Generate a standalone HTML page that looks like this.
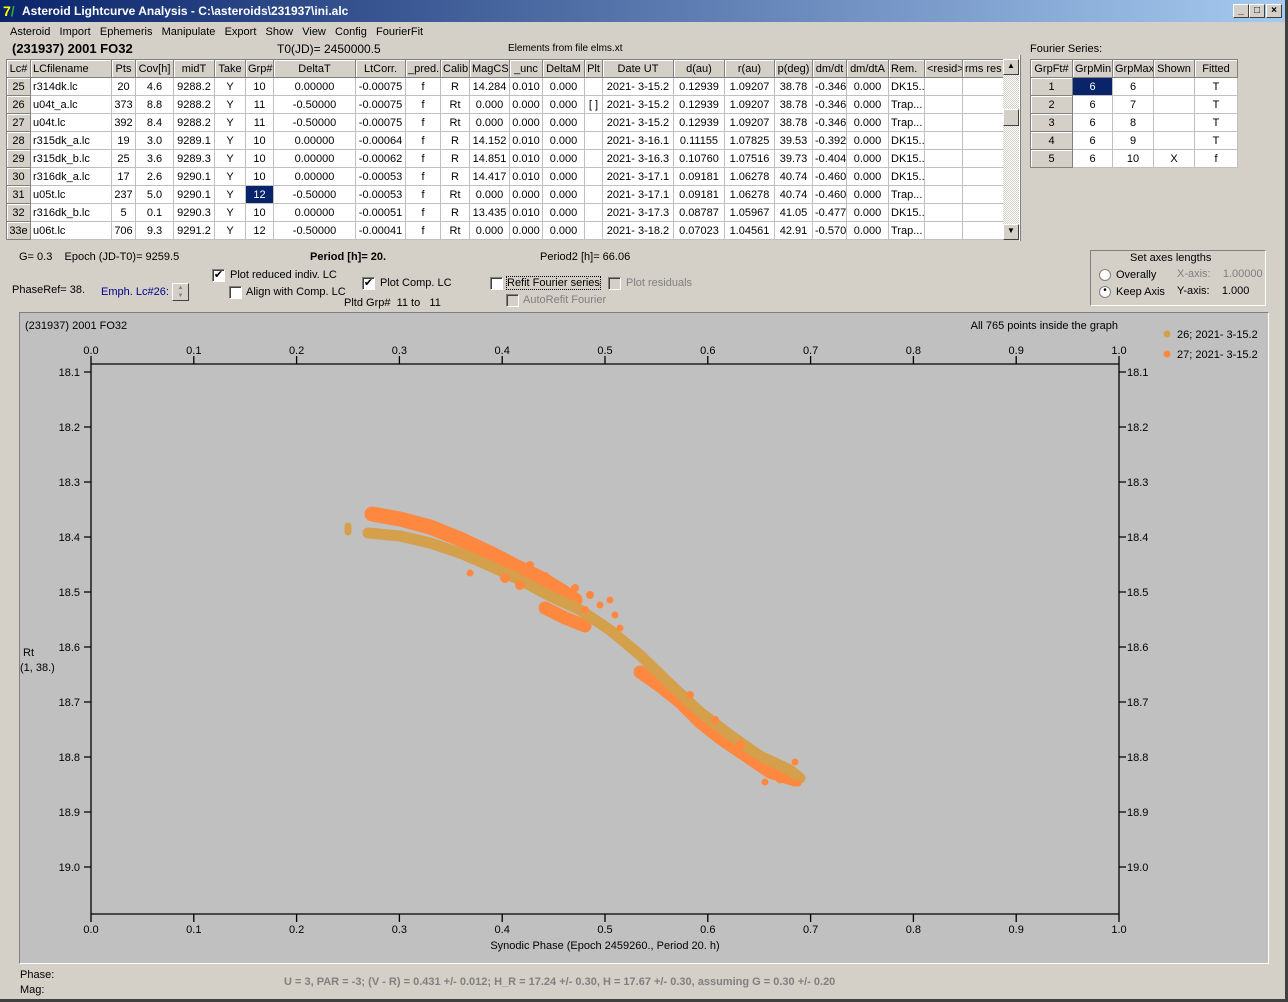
<!DOCTYPE html>
<html><head><meta charset="utf-8"><style>
*{box-sizing:border-box}
body{margin:0;width:1288px;height:1002px;background:#d4d0c8;font-family:"Liberation Sans",sans-serif;font-size:11px;color:#000;position:relative;overflow:hidden}
.a{position:absolute;white-space:nowrap}
#title{left:0;top:0;width:1288px;height:22px;background:linear-gradient(90deg,#0a246a,#a6caf0);color:#fff;font-weight:bold;font-size:12px;line-height:22px;padding-left:22px}
.wb{position:absolute;top:4px;width:16px;height:14px;background:#d4d0c8;border:1px solid;border-color:#fff #404040 #404040 #fff;font-size:10px;line-height:12px;text-align:center;color:#000;font-weight:bold}
table{border-collapse:collapse;table-layout:fixed;position:absolute;background:#fff}
td{border:1px solid #c0c0c0;height:18px;padding:0 2px;text-align:center;overflow:hidden;white-space:nowrap;font-size:11px}
tr.h td{background:#d4d0c8;border:1px solid #808080;box-shadow:inset 1px 1px #fff}
td.f{background:#d4d0c8;border:1px solid #808080;box-shadow:inset 1px 1px #fff}
td.l{text-align:left}
td.s{background:#0a246a;color:#fff}
.cb{position:absolute;width:13px;height:13px;background:#fff;border:1px solid;border-color:#808080 #fff #fff #808080;box-shadow:inset 1px 1px #404040;font-size:11px;line-height:11px;text-align:center}
.dis{color:#808080}
</style></head><body>
<div class="a" id="title">Asteroid Lightcurve Analysis - C:\asteroids\231937\ini.alc</div>
<div class="a" style="left:3px;top:3px;width:16px;height:16px;color:#ff0;font-weight:bold;font-size:14px;line-height:16px">7<span style="color:#3a3">/</span></div>
<div class="wb" style="left:1233px">_</div><div class="wb" style="left:1249px">□</div><div class="wb" style="left:1266px">×</div>
<div class="a" style="left:10px;top:26px">Asteroid&nbsp;&nbsp;&nbsp;Import&nbsp;&nbsp;&nbsp;Ephemeris&nbsp;&nbsp;&nbsp;Manipulate&nbsp;&nbsp;&nbsp;Export&nbsp;&nbsp;&nbsp;Show&nbsp;&nbsp;&nbsp;View&nbsp;&nbsp;&nbsp;Config&nbsp;&nbsp;&nbsp;FourierFit</div>
<div class="a" style="left:12px;top:41px;font-weight:bold;font-size:13px">(231937) 2001 FO32</div>
<div class="a" style="left:277px;top:42px;font-size:12px">T0(JD)= 2450000.5</div>
<div class="a" style="left:508px;top:43px;font-size:10px">Elements from file elms.xt</div>
<div class="a" style="left:1030px;top:43px">Fourier Series:</div>
<div class="a" style="left:1019px;top:55px;width:2px;height:186px;border-left:1px solid #fff;border-right:1px solid #808080"></div>

<table style="left:6px;top:59px;width:997px">
<colgroup><col style="width:24px"><col style="width:81px"><col style="width:24px"><col style="width:38px"><col style="width:41px"><col style="width:31px"><col style="width:28px"><col style="width:82px"><col style="width:50px"><col style="width:35px"><col style="width:29px"><col style="width:40px"><col style="width:33px"><col style="width:42px"><col style="width:18px"><col style="width:71px"><col style="width:51px"><col style="width:50px"><col style="width:38px"><col style="width:34px"><col style="width:42px"><col style="width:36px"><col style="width:38px"><col style="width:41px"></colgroup>
<tr class="h"><td>Lc#</td><td class="l">LCfilename</td><td>Pts</td><td>Cov[h]</td><td>midT</td><td>Take</td><td>Grp#</td><td>DeltaT</td><td>LtCorr.</td><td>_pred.</td><td>Calib.</td><td>MagCS</td><td>_unc</td><td>DeltaM</td><td>Plt</td><td>Date UT</td><td>d(au)</td><td>r(au)</td><td>p(deg)</td><td>dm/dt</td><td>dm/dtA</td><td class="l">Rem.</td><td>&lt;resid&gt;</td><td>rms res</td></tr>
<tr><td class="f">25</td><td class="l">r314dk.lc</td><td>20</td><td>4.6</td><td>9288.2</td><td>Y</td><td>10</td><td>0.00000</td><td>-0.00075</td><td>f</td><td>R</td><td>14.284</td><td>0.010</td><td>0.000</td><td></td><td>2021- 3-15.2</td><td>0.12939</td><td>1.09207</td><td>38.78</td><td>-0.346</td><td>0.000</td><td class="l">DK15..</td><td></td><td></td></tr>
<tr><td class="f">26</td><td class="l">u04t_a.lc</td><td>373</td><td>8.8</td><td>9288.2</td><td>Y</td><td>11</td><td>-0.50000</td><td>-0.00075</td><td>f</td><td>Rt</td><td>0.000</td><td>0.000</td><td>0.000</td><td>[ ]</td><td>2021- 3-15.2</td><td>0.12939</td><td>1.09207</td><td>38.78</td><td>-0.346</td><td>0.000</td><td class="l">Trap...</td><td></td><td></td></tr>
<tr><td class="f">27</td><td class="l">u04t.lc</td><td>392</td><td>8.4</td><td>9288.2</td><td>Y</td><td>11</td><td>-0.50000</td><td>-0.00075</td><td>f</td><td>Rt</td><td>0.000</td><td>0.000</td><td>0.000</td><td></td><td>2021- 3-15.2</td><td>0.12939</td><td>1.09207</td><td>38.78</td><td>-0.346</td><td>0.000</td><td class="l">Trap...</td><td></td><td></td></tr>
<tr><td class="f">28</td><td class="l">r315dk_a.lc</td><td>19</td><td>3.0</td><td>9289.1</td><td>Y</td><td>10</td><td>0.00000</td><td>-0.00064</td><td>f</td><td>R</td><td>14.152</td><td>0.010</td><td>0.000</td><td></td><td>2021- 3-16.1</td><td>0.11155</td><td>1.07825</td><td>39.53</td><td>-0.392</td><td>0.000</td><td class="l">DK15..</td><td></td><td></td></tr>
<tr><td class="f">29</td><td class="l">r315dk_b.lc</td><td>25</td><td>3.6</td><td>9289.3</td><td>Y</td><td>10</td><td>0.00000</td><td>-0.00062</td><td>f</td><td>R</td><td>14.851</td><td>0.010</td><td>0.000</td><td></td><td>2021- 3-16.3</td><td>0.10760</td><td>1.07516</td><td>39.73</td><td>-0.404</td><td>0.000</td><td class="l">DK15..</td><td></td><td></td></tr>
<tr><td class="f">30</td><td class="l">r316dk_a.lc</td><td>17</td><td>2.6</td><td>9290.1</td><td>Y</td><td>10</td><td>0.00000</td><td>-0.00053</td><td>f</td><td>R</td><td>14.417</td><td>0.010</td><td>0.000</td><td></td><td>2021- 3-17.1</td><td>0.09181</td><td>1.06278</td><td>40.74</td><td>-0.460</td><td>0.000</td><td class="l">DK15..</td><td></td><td></td></tr>
<tr><td class="f">31</td><td class="l">u05t.lc</td><td>237</td><td>5.0</td><td>9290.1</td><td>Y</td><td class="s">12</td><td>-0.50000</td><td>-0.00053</td><td>f</td><td>Rt</td><td>0.000</td><td>0.000</td><td>0.000</td><td></td><td>2021- 3-17.1</td><td>0.09181</td><td>1.06278</td><td>40.74</td><td>-0.460</td><td>0.000</td><td class="l">Trap...</td><td></td><td></td></tr>
<tr><td class="f">32</td><td class="l">r316dk_b.lc</td><td>5</td><td>0.1</td><td>9290.3</td><td>Y</td><td>10</td><td>0.00000</td><td>-0.00051</td><td>f</td><td>R</td><td>13.435</td><td>0.010</td><td>0.000</td><td></td><td>2021- 3-17.3</td><td>0.08787</td><td>1.05967</td><td>41.05</td><td>-0.477</td><td>0.000</td><td class="l">DK15..</td><td></td><td></td></tr>
<tr><td class="f">33e</td><td class="l">u06t.lc</td><td>706</td><td>9.3</td><td>9291.2</td><td>Y</td><td>12</td><td>-0.50000</td><td>-0.00041</td><td>f</td><td>Rt</td><td>0.000</td><td>0.000</td><td>0.000</td><td></td><td>2021- 3-18.2</td><td>0.07023</td><td>1.04561</td><td>42.91</td><td>-0.570</td><td>0.000</td><td class="l">Trap...</td><td></td><td></td></tr>
</table>
<div class="a" style="left:1003px;top:59px;width:16px;height:181px;background:repeating-conic-gradient(#fff 0 25%,#d4d0c8 0 50%) 0 0/2px 2px"></div>
<div class="wb" style="left:1003px;top:59px;width:16px;height:16px;font-size:8px">▲</div>
<div class="wb" style="left:1003px;top:109px;width:16px;height:17px"></div>
<div class="wb" style="left:1003px;top:224px;width:16px;height:16px;font-size:8px">▼</div>

<table style="left:1030px;top:59px;width:207px">
<colgroup><col style="width:42px"><col style="width:40px"><col style="width:41px"><col style="width:41px"><col style="width:43px"></colgroup>
<tr class="h"><td>GrpFt#</td><td>GrpMin</td><td>GrpMax</td><td>Shown</td><td>Fitted</td></tr>
<tr><td class="f">1</td><td class="s">6</td><td>6</td><td></td><td>T</td></tr>
<tr><td class="f">2</td><td>6</td><td>7</td><td></td><td>T</td></tr>
<tr><td class="f">3</td><td>6</td><td>8</td><td></td><td>T</td></tr>
<tr><td class="f">4</td><td>6</td><td>9</td><td></td><td>T</td></tr>
<tr><td class="f">5</td><td>6</td><td>10</td><td>X</td><td>f</td></tr>
</table>

<div class="a" style="left:19px;top:251px">G= 0.3&nbsp;&nbsp;&nbsp;&nbsp;Epoch (JD-T0)= 9259.5</div>
<div class="a" style="left:310px;top:251px;font-weight:bold">Period [h]= 20.</div>
<div class="a" style="left:540px;top:251px">Period2 [h]= 66.06</div>
<div class="a" style="left:12px;top:284px">PhaseRef= 38.</div>
<div class="a" style="left:101px;top:286px;color:#00008b">Emph. Lc#26:</div>
<div class="a" style="left:172px;top:283px;width:17px;height:18px;border:1px solid;border-color:#fff #404040 #404040 #fff;font-size:6px;line-height:8px;text-align:center;color:#808080">▲<br>▼</div>
<div class="cb" style="left:212px;top:269px">✔</div><div class="a" style="left:230px;top:269px">Plot reduced indiv. LC</div>
<div class="cb" style="left:229px;top:286px"></div><div class="a" style="left:246px;top:286px">Align with Comp. LC</div>
<div class="cb" style="left:362px;top:277px">✔</div><div class="a" style="left:380px;top:277px">Plot Comp. LC</div>
<div class="a" style="left:344px;top:297px">Pltd Grp#&nbsp; 11 to&nbsp;&nbsp; 11</div>
<div class="cb" style="left:490px;top:277px"></div><div class="a" style="left:507px;top:277px;outline:1px dotted #000">Refit Fourier series</div>
<div class="cb" style="left:608px;top:277px;background:#d4d0c8"></div><div class="a dis" style="left:626px;top:277px">Plot residuals</div>
<div class="cb" style="left:506px;top:294px;background:#d4d0c8"></div><div class="a dis" style="left:523px;top:294px">AutoRefit Fourier</div>

<div class="a" style="left:1090px;top:250px;width:176px;height:56px;border:1px solid;border-color:#808080 #fff #fff #808080"></div>
<div class="a" style="left:1130px;top:252px">Set axes lengths</div>
<div class="a" style="left:1099px;top:269px;width:12px;height:12px;border-radius:50%;background:#fff;border:1px solid #808080"></div><div class="a" style="left:1116px;top:269px">Overally</div>
<div class="a" style="left:1099px;top:286px;width:12px;height:12px;border-radius:50%;background:#fff;border:1px solid #808080;text-align:center;line-height:8px;font-size:10px">•</div><div class="a" style="left:1116px;top:286px">Keep Axis</div>
<div class="a dis" style="left:1177px;top:268px">X-axis:&nbsp;&nbsp;&nbsp;&nbsp;1.00000</div>
<div class="a" style="left:1177px;top:285px">Y-axis:&nbsp;&nbsp;&nbsp;&nbsp;1.000</div>

<div class="a" style="left:19px;top:312px;width:1250px;height:652px;background:#c0c0c0;border:1px solid;border-color:#808080 #fff #fff #808080"></div>
<svg class="a" style="left:0;top:0" width="1288" height="1002" font-family="Liberation Sans, sans-serif" font-size="11">
<text x="25" y="329">(231937) 2001 FO32</text>
<text x="1118" y="329" text-anchor="end">All 765 points inside the graph</text>
<circle cx="1167" cy="334" r="3.5" fill="#d4a04c"/><text x="1177" y="338">26; 2021- 3-15.2</text>
<circle cx="1167" cy="354" r="3.5" fill="#ff8840"/><text x="1177" y="358">27; 2021- 3-15.2</text>
<g stroke="#000" stroke-width="1.3" fill="none">
<path d="M91 364H1119M91 914H1119M91 364V914M1119 364V914"/>
<path d="M91 356v8M193.8 356v8M296.6 356v8M399.4 356v8M502.2 356v8M605 356v8M707.8 356v8M810.6 356v8M913.4 356v8M1016.2 356v8M1119 356v8"/>
<path d="M91 914v8M193.8 914v8M296.6 914v8M399.4 914v8M502.2 914v8M605 914v8M707.8 914v8M810.6 914v8M913.4 914v8M1016.2 914v8M1119 914v8"/>
<path d="M84 372h7M84 427h7M84 482h7M84 537h7M84 592h7M84 647h7M84 702h7M84 757h7M84 812h7M84 867h7"/>
<path d="M1119 372h7M1119 427h7M1119 482h7M1119 537h7M1119 592h7M1119 647h7M1119 702h7M1119 757h7M1119 812h7M1119 867h7"/>
</g>
<g text-anchor="middle">
<text x="91" y="354">0.0</text><text x="193.8" y="354">0.1</text><text x="296.6" y="354">0.2</text><text x="399.4" y="354">0.3</text><text x="502.2" y="354">0.4</text><text x="605" y="354">0.5</text><text x="707.8" y="354">0.6</text><text x="810.6" y="354">0.7</text><text x="913.4" y="354">0.8</text><text x="1016.2" y="354">0.9</text><text x="1119" y="354">1.0</text>
<text x="91" y="933">0.0</text><text x="193.8" y="933">0.1</text><text x="296.6" y="933">0.2</text><text x="399.4" y="933">0.3</text><text x="502.2" y="933">0.4</text><text x="605" y="933">0.5</text><text x="707.8" y="933">0.6</text><text x="810.6" y="933">0.7</text><text x="913.4" y="933">0.8</text><text x="1016.2" y="933">0.9</text><text x="1119" y="933">1.0</text>
<text x="605" y="949">Synodic Phase (Epoch 2459260., Period 20. h)</text>
</g>
<g text-anchor="end"><text x="80" y="376">18.1</text><text x="80" y="431">18.2</text><text x="80" y="486">18.3</text><text x="80" y="541">18.4</text><text x="80" y="596">18.5</text><text x="80" y="651">18.6</text><text x="80" y="706">18.7</text><text x="80" y="761">18.8</text><text x="80" y="816">18.9</text><text x="80" y="871">19.0</text></g>
<g><text x="1127" y="376">18.1</text><text x="1127" y="431">18.2</text><text x="1127" y="486">18.3</text><text x="1127" y="541">18.4</text><text x="1127" y="596">18.5</text><text x="1127" y="651">18.6</text><text x="1127" y="706">18.7</text><text x="1127" y="761">18.8</text><text x="1127" y="816">18.9</text><text x="1127" y="871">19.0</text></g>
<text x="23" y="656">Rt</text><text x="20" y="671">(1, 38.)</text>
<g fill="none" stroke-linecap="round" stroke-linejoin="round">
<path d="M372 514L400 519L430 527L460 539L490 553L515 566L540 578L560 590L575 600" stroke="#ff8840" stroke-width="15"/>
<path d="M545 608L565 618L585 626M640 672L660 686L680 702L700 722L720 738L745 755L770 772L795 780" stroke="#ff8840" stroke-width="13"/>
<path d="M368 533L400 536L430 543L460 553L490 566L520 580L550 596L580 610L610 630L640 655L670 684L700 712L730 735L760 756L790 770L800 778" stroke="#d4a04c" stroke-width="11"/>
<path d="M348 526v6" stroke="#d4a04c" stroke-width="7"/>
</g>
<g fill="#ff8840">
<circle cx="470" cy="573" r="3.5"/><circle cx="505" cy="578" r="5"/><circle cx="520" cy="585" r="5"/><circle cx="575" cy="588" r="4"/><circle cx="590" cy="595" r="4"/><circle cx="600" cy="605" r="3.5"/><circle cx="615" cy="615" r="3.5"/><circle cx="620" cy="628" r="3.5"/><circle cx="585" cy="610" r="4"/><circle cx="610" cy="600" r="3.5"/><circle cx="690" cy="695" r="4"/><circle cx="715" cy="720" r="4"/><circle cx="740" cy="745" r="5"/><circle cx="755" cy="762" r="4"/><circle cx="795" cy="762" r="3.5"/><circle cx="798" cy="783" r="3.5"/><circle cx="780" cy="780" r="3.5"/><circle cx="765" cy="782" r="3.5"/><circle cx="378" cy="516" r="4"/><circle cx="450" cy="535" r="4"/><circle cx="545" cy="577" r="5"/><circle cx="530" cy="565" r="4"/>
</g>
</svg>

<div class="a" style="left:20px;top:969px">Phase:</div>
<div class="a" style="left:20px;top:984px">Mag:</div>
<div class="a" style="left:284px;top:976px;color:#808080;font-weight:bold;font-size:11px">U = 3, PAR = -3; (V - R) = 0.431 +/- 0.012; H_R = 17.24 +/- 0.30, H = 17.67 +/- 0.30, assuming G = 0.30 +/- 0.20</div>
<div class="a" style="left:0;top:999px;width:1288px;height:3px;background:#404040"></div>
<div class="a" style="left:1285px;top:0;width:3px;height:1002px;background:#404040"></div>
</body></html>
